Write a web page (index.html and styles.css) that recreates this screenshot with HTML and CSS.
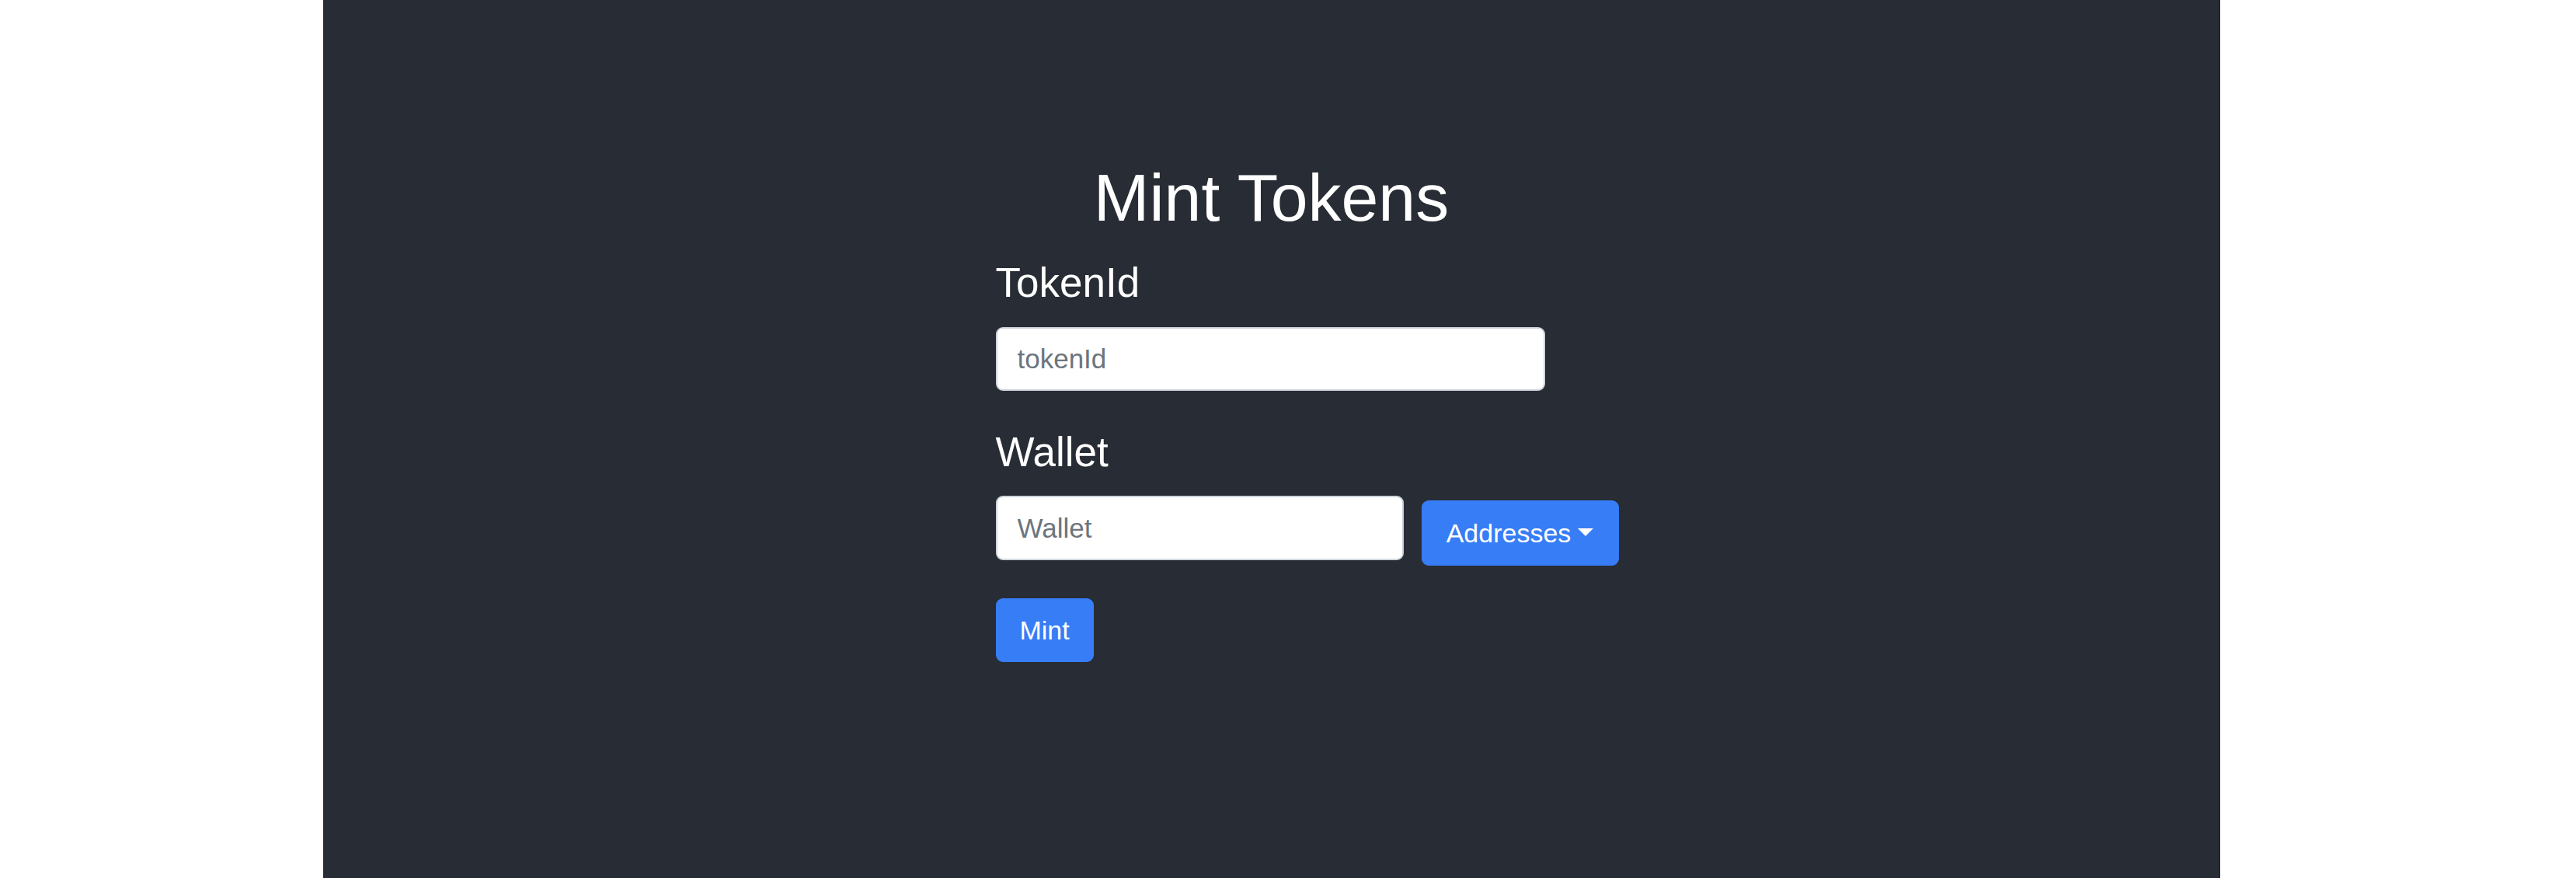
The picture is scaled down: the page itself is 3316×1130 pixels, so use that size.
FILE: index.html
```html
<!DOCTYPE html>
<html lang="en">
<head>
<meta charset="utf-8">
<title>Mint Tokens</title>
<link rel="stylesheet" href="styles.css">
</head>
<body>
<div class="page">
  <main class="app">
    <div class="column">
      <h1 class="title">Mint Tokens</h1>
      <form class="mint-form">
        <label class="field-label" for="tokenId">TokenId</label>
        <input class="field field-token" id="tokenId" type="text" placeholder="tokenId">
        <label class="field-label field-label-wallet" for="wallet">Wallet</label>
        <div class="wallet-row">
          <input class="field field-wallet" id="wallet" type="text" placeholder="Wallet">
          <button class="btn btn-dropdown" type="button">Addresses<span class="caret"></span></button>
        </div>
        <button class="btn btn-mint" type="button">Mint</button>
      </form>
    </div>
  </main>
</div>
</body>
</html>
```

FILE: styles.css
```css
html, body {
  margin: 0;
  padding: 0;
  background: #ffffff;
  height: 100%;
}

body {
  font-family: "Liberation Sans", Arial, Helvetica, sans-serif;
  overflow: hidden;
}

.page {
  display: flex;
  height: 1130px;
  padding-left: 416px;
}

.app {
  width: 2441px;
  height: 1130px;
  background: #282c34;
  border-right: 1px solid #22252b;
  display: flex;
  justify-content: center;
  color: #ffffff;
}

.column {
  width: 710px;
  padding-top: 211px;
}

.title {
  margin: 0;
  font-size: 86px;
  line-height: 86px;
  font-weight: 400;
  text-align: center;
  white-space: nowrap;
}

.mint-form {
  display: flex;
  flex-direction: column;
  align-items: flex-start;
  padding-top: 40px;
}

.field-label {
  display: block;
  font-size: 53px;
  line-height: 53px;
  font-weight: 400;
  margin-bottom: 31px;
}

.field-label-wallet {
  margin-top: 52px;
  margin-bottom: 30px;
}

.field {
  box-sizing: border-box;
  height: 82px;
  border: 2px solid #ced4da;
  border-radius: 9px;
  background: #ffffff;
  padding: 0 26px;
  font-family: "Liberation Sans", Arial, Helvetica, sans-serif;
  font-size: 35px;
  color: #495057;
  outline: none;
}

.field::placeholder {
  color: #6c757d;
  opacity: 1;
}

.field-token {
  width: 707px;
}

.wallet-row {
  display: flex;
  align-items: flex-start;
  gap: 23px;
  white-space: nowrap;
}

.field-wallet {
  width: 525px;
  height: 83px;
}

.btn {
  box-sizing: border-box;
  height: 84px;
  border: 2px solid #377df6;
  border-radius: 9px;
  background: #377df6;
  color: #ffffff;
  font-family: "Liberation Sans", Arial, Helvetica, sans-serif;
  font-size: 34px;
  padding: 0 29px;
  display: inline-flex;
  align-items: center;
  cursor: pointer;
}

.btn-dropdown {
  margin-top: 6px;
  width: 254px;
  justify-content: center;
}

.caret {
  display: inline-block;
  margin-left: 9px;
  margin-top: -3px;
  width: 0;
  height: 0;
  border-top: 10px solid #ffffff;
  border-left: 10px solid transparent;
  border-right: 10px solid transparent;
}

.btn-mint {
  margin-top: 42px;
  height: 82px;
  width: 126px;
  justify-content: center;
}
```
